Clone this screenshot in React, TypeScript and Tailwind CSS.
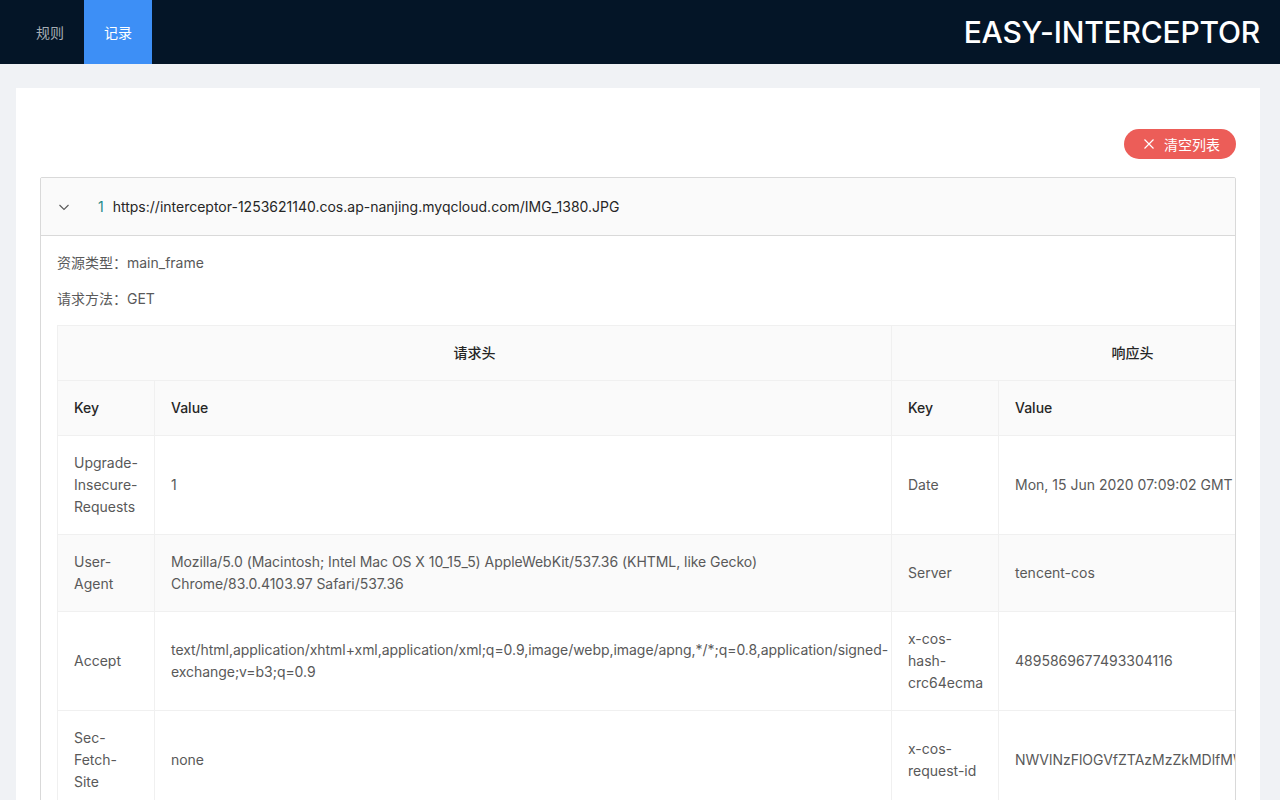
import React from "react";

const reqHeaders: [string, string][] = [
  ["Upgrade-Insecure-Requests", "1"],
  [
    "User-Agent",
    "Mozilla/5.0 (Macintosh; Intel Mac OS X 10_15_5) AppleWebKit/537.36 (KHTML, like Gecko) Chrome/83.0.4103.97 Safari/537.36",
  ],
  [
    "Accept",
    "text/html,application/xhtml+xml,application/xml;q=0.9,image/webp,image/apng,*/*;q=0.8,application/signed-exchange;v=b3;q=0.9",
  ],
  ["Sec-Fetch-Site", "none"],
  ["Sec-Fetch-Mode", "navigate"],
  ["Sec-Fetch-User", "?1"],
];

const resHeaders: [string, string][] = [
  ["Date", "Mon, 15 Jun 2020 07:09:02 GMT"],
  ["Server", "tencent-cos"],
  ["x-cos-hash-crc64ecma", "4895869677493304116"],
  ["x-cos-request-id", "NWVlNzFlOGVfZTAzMzZkMDlfMWU2NzhfYTBkODRj"],
  ["Content-Type", "image/jpeg"],
  ["Content-Length", "2311875"],
];

const font = { fontFamily: 'Inter, "Noto Sans CJK SC", sans-serif' };

export default function App() {
  return (
    <div className="min-h-screen bg-[#f0f2f5] text-[14px]" style={font}>
      {/* header */}
      <header className="flex h-16 items-center justify-between bg-[#041527] pl-4 pr-5">
        <nav className="flex h-full">
          <div className="flex h-full items-center px-5 text-[#a6adb4]">规则</div>
          <div className="flex h-full items-center bg-[#3d8ff6] px-5 text-white">记录</div>
        </nav>
        <div className="text-[30px] font-medium tracking-[-0.2px] text-white">EASY-INTERCEPTOR</div>
      </header>

      <main className="pl-4 pr-5 pt-6">
        <div className="bg-white px-6 pt-[41px] pb-6">
          <div className="flex justify-end">
            <button className="flex h-[30px] items-center gap-[9px] rounded-full bg-[#ec5d58] pl-[19px] pr-4 text-white">
              <svg width="12" height="12" viewBox="0 0 12 12" fill="none" stroke="currentColor" strokeWidth="1.2">
                <path d="M1.5 1.5l9 9M10.5 1.5l-9 9" />
              </svg>
              <span>清空列表</span>
            </button>
          </div>

          {/* collapse */}
          <div className="mt-[18px] overflow-hidden rounded-[2px] border border-[#d9d9d9]">
            <div className="flex h-[58px] items-center border-b border-[#d9d9d9] bg-[#fafafa] pl-4 text-[#262626]">
              <svg width="12" height="12" viewBox="0 0 12 12" fill="none" stroke="#595959" strokeWidth="1.1" className="ml-[1px]">
                <path d="M1.5 4l4.5 4.5L10.5 4" />
              </svg>
              <span className="ml-[28px] text-[#1f8a88]">1</span>
              <span className="ml-[9px]">https://interceptor-1253621140.cos.ap-nanjing.myqcloud.com/IMG_1380.JPG</span>
            </div>

            <div className="overflow-hidden pl-4 pt-4 text-[#595959]">
              <p className="leading-[22px]">资源类型：main_frame</p>
              <p className="mt-[14px] leading-[22px]">请求方法：GET</p>

              <table className="mt-[15px] w-[1316px] table-fixed border-separate border-spacing-0 border-l border-t border-[#f0f0f0] leading-[22px]">
                <colgroup>
                  <col className="w-[97px]" />
                  <col className="w-[737px]" />
                  <col className="w-[107px]" />
                  <col className="w-[375px]" />
                </colgroup>
                <thead className="bg-[#fafafa] text-[#262626]">
                  <tr>
                    <th colSpan={2} className="border-b border-r border-[#f0f0f0] p-4 text-center font-medium">请求头</th>
                    <th colSpan={2} className="border-b border-r border-[#f0f0f0] p-4 text-center font-medium">响应头</th>
                  </tr>
                  <tr>
                    {["Key", "Value", "Key", "Value"].map((h, i) => (
                      <th key={i} className="border-b border-r border-[#f0f0f0] p-4 text-left font-medium">
                        {h}
                      </th>
                    ))}
                  </tr>
                </thead>
                <tbody>
                  {reqHeaders.map(([k, v], i) => (
                    <tr key={k} className={i === 1 ? "bg-[#fafafa]" : ""}>
                      <td className="border-b border-r border-[#f0f0f0] p-4 align-middle">{k}</td>
                      <td className="border-b border-r border-[#f0f0f0] p-4 align-middle tracking-[-0.05px]">{v}</td>
                      <td className="border-b border-r border-[#f0f0f0] p-4 align-middle">{resHeaders[i][0]}</td>
                      <td className="whitespace-nowrap border-b border-r border-[#f0f0f0] p-4 align-middle">{resHeaders[i][1]}</td>
                    </tr>
                  ))}
                </tbody>
              </table>
            </div>
          </div>
        </div>
      </main>
    </div>
  );
}
